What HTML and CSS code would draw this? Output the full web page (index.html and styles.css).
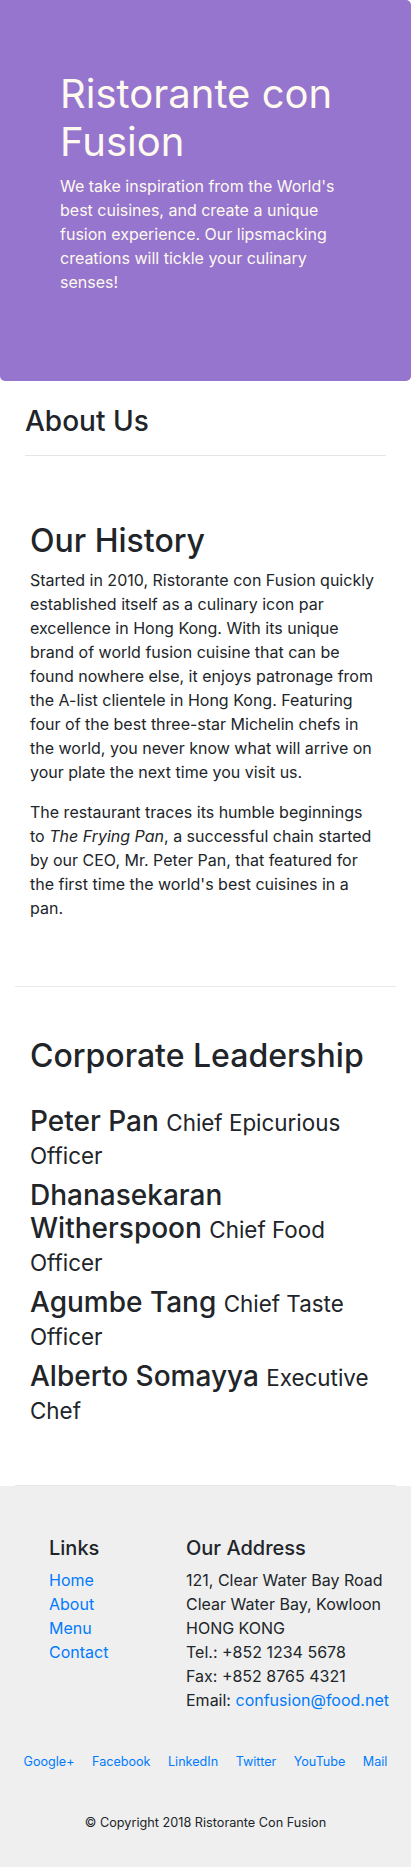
FILE: index.html
```html
<!DOCTYPE html>
<html lang="en">
<head>
<meta charset="utf-8">
<title>Ristorante con Fusion - About Us</title>
<link rel="stylesheet" href="styles.css">
</head>
<body>
<header class="jumbotron">
  <div class="jumbo-inner">
    <h1 class="jumbo-title">Ristorante con Fusion</h1>
    <p class="jumbo-lead">We take inspiration from the World's best cuisines, and create a unique fusion experience. Our lipsmacking creations will tickle your culinary senses!</p>
  </div>
</header>

<main>
  <div class="about-head">
    <h3 class="about-title">About Us</h3>
    <div class="rule"></div>
  </div>

  <section class="row-content">
    <h2 class="section-title">Our History</h2>
    <p class="para">Started in 2010, Ristorante con Fusion quickly established itself as a culinary icon par excellence in Hong Kong. With its unique brand of world fusion cuisine that can be found nowhere else, it enjoys patronage from the A-list clientele in Hong Kong. Featuring four of the best three-star Michelin chefs in the world, you never know what will arrive on your plate the next time you visit us.</p>
    <p class="para">The restaurant traces its humble beginnings to <em>The Frying Pan</em>, a successful chain started by our CEO, Mr. Peter Pan, that featured for the first time the world's best cuisines in a pan.</p>
  </section>

  <section class="row-content">
    <h2 class="section-title">Corporate Leadership</h2>
    <div class="leaders">
      <h3 class="leader">Peter Pan <small class="role">Chief Epicurious Officer</small></h3>
      <h3 class="leader">Dhanasekaran Witherspoon <small class="role">Chief Food Officer</small></h3>
      <h3 class="leader">Agumbe Tang <small class="role">Chief Taste Officer</small></h3>
      <h3 class="leader">Alberto Somayya <small class="role">Executive Chef</small></h3>
    </div>
  </section>
</main>

<footer class="footer">
  <div class="footer-cols">
    <div class="col-links">
      <h5 class="footer-title">Links</h5>
      <ul class="link-list">
        <li><a href="#">Home</a></li>
        <li><a href="#">About</a></li>
        <li><a href="#">Menu</a></li>
        <li><a href="#">Contact</a></li>
      </ul>
    </div>
    <div class="col-address">
      <h5 class="footer-title">Our Address</h5>
      <address class="address">
        121, Clear Water Bay Road<br>
        Clear Water Bay, Kowloon<br>
        HONG KONG<br>
        Tel.: +852 1234 5678<br>
        Fax: +852 8765 4321<br>
        Email: <a href="#">confusion@food.net</a>
      </address>
    </div>
  </div>
  <div class="social">
    <a href="#">Google+</a>
    <a href="#">Facebook</a>
    <a href="#">LinkedIn</a>
    <a href="#">Twitter</a>
    <a href="#">YouTube</a>
    <a href="#">Mail</a>
  </div>
  <p class="copyright">© Copyright 2018 Ristorante Con Fusion</p>
</footer>
</body>
</html>
```

FILE: styles.css
```css
* { box-sizing: border-box; }

html, body {
  margin: 0;
  padding: 0;
}

body {
  font-family: Inter, "Noto Sans", "Liberation Sans", sans-serif;
  font-size: 16px;
  line-height: 1.5;
  color: #212529;
  background: #fff;
}

a {
  color: #007bff;
  text-decoration: none;
}

h1, h2, h3, h5 {
  font-weight: 500;
  line-height: 1.2;
  margin: 0;
}

/* Jumbotron */
.jumbotron {
  background: #9575cd;
  color: floralwhite;
  border-radius: 0 5px 5px 5px;
  padding: 70px 30px 87px;
}

.jumbo-inner {
  padding: 0 30px;
}

.jumbo-title {
  font-size: 40px;
  font-weight: 400;
  margin-bottom: 8px;
}

.jumbo-lead {
  margin: 0;
}

/* About heading */
.about-head {
  margin: 0 25px;
  padding-top: 24px;
}

.about-title {
  font-size: 28px;
  margin-bottom: 16px;
}

.rule {
  border-top: 1px solid rgba(0, 0, 0, 0.1);
  margin: 0 0 16px;
}

/* Sections */
.row-content {
  margin: 0 15px;
  padding: 50px 15px;
  border-bottom: 1px solid #e9e9e9;
}

.section-title {
  font-size: 32px;
  margin-bottom: 8px;
}

.para {
  margin: 0 0 16px;
}

.leaders {
  padding-top: 22px;
  padding-bottom: 1px;
}

.leader {
  font-size: 28px;
  line-height: 1.17;
  margin-bottom: 8.5px;
}

.role {
  font-size: 80%;
  font-weight: 400;
}

/* Footer */
.footer {
  background: #efefef;
  padding: 50px 0 38px;
}

.footer-cols {
  display: flex;
  padding-left: 49px;
}

.col-links {
  width: 137px;
}

.footer-title {
  font-size: 20px;
  margin-bottom: 8px;
}

.link-list {
  list-style: none;
  margin: 0;
  padding: 0;
}

.address {
  font-style: normal;
  margin: 0 0 16px;
}

.social {
  display: flex;
  justify-content: center;
  gap: 17.5px;
  font-size: 12.6px;
  line-height: 1.5;
  margin-top: 25px;
}

.copyright {
  text-align: center;
  font-size: 12.7px;
  margin: 40.5px 0 0;
}
```
